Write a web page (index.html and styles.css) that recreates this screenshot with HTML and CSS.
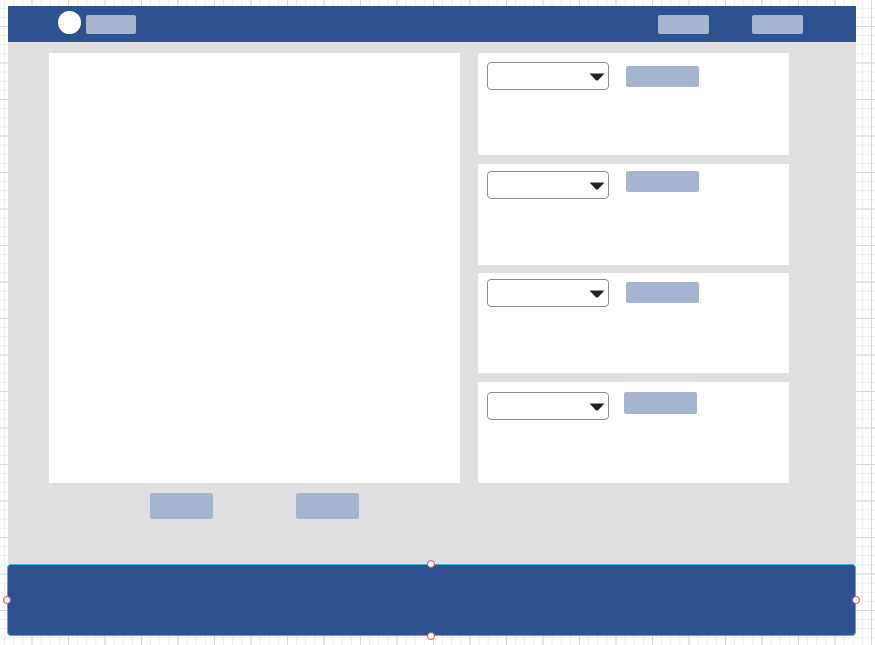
FILE: index.html
```html
<!DOCTYPE html>
<html>
<head>
<meta charset="utf-8">
<link rel="stylesheet" href="styles.css">
</head>
<body>
<div class="frame">
  <header class="topbar">
    <div class="brand">
      <span class="logo-dot"></span>
      <span class="logo-pill"></span>
    </div>
    <nav class="nav">
      <span class="nav-btn"></span>
      <span class="nav-btn"></span>
    </nav>
  </header>
  <main class="main">
    <section class="left">
      <div class="canvas-panel"></div>
      <div class="actions">
        <span class="action-btn"></span>
        <span class="action-btn"></span>
      </div>
    </section>
    <section class="cards">
      <div class="card card-1">
        <div class="select"><svg class="caret" viewBox="0 0 16 8" width="16" height="8"><path d="M0.5 0.5 H15.5 L9.3 7 Q8 8.2 6.7 7 Z" fill="#222"/></svg></div>
        <span class="card-btn card-btn-1"></span>
      </div>
      <div class="card card-2">
        <div class="select"><svg class="caret" viewBox="0 0 16 8" width="16" height="8"><path d="M0.5 0.5 H15.5 L9.3 7 Q8 8.2 6.7 7 Z" fill="#222"/></svg></div>
        <span class="card-btn"></span>
      </div>
      <div class="card card-3">
        <div class="select"><svg class="caret" viewBox="0 0 16 8" width="16" height="8"><path d="M0.5 0.5 H15.5 L9.3 7 Q8 8.2 6.7 7 Z" fill="#222"/></svg></div>
        <span class="card-btn card-btn-3"></span>
      </div>
      <div class="card card-4">
        <div class="select"><svg class="caret" viewBox="0 0 16 8" width="16" height="8"><path d="M0.5 0.5 H15.5 L9.3 7 Q8 8.2 6.7 7 Z" fill="#222"/></svg></div>
        <span class="card-btn card-btn-4"></span>
      </div>
    </section>
  </main>
  <footer class="footer">
    <span class="handle handle-top"></span>
    <span class="handle handle-left"></span>
    <span class="handle handle-right"></span>
    <span class="handle handle-bottom"></span>
  </footer>
</div>
</body>
</html>
```

FILE: styles.css
```css
html, body {
  margin: 0;
  padding: 0;
}
body {
  width: 875px;
  height: 645px;
  overflow: hidden;
  font-family: "Liberation Sans", Arial, sans-serif;
  background-color: #ffffff;
  background-image:
    linear-gradient(to right, #d6d6d6 1px, transparent 1px),
    linear-gradient(to bottom, #d6d6d6 1px, transparent 1px),
    linear-gradient(to right, #ececec 1px, transparent 1px),
    linear-gradient(to bottom, #ececec 1px, transparent 1px);
  background-size: 36.5px 36.5px, 36.5px 36.5px, 9.125px 9.125px, 9.125px 9.125px;
  background-position: 31.5px 26px, 31.5px 26px, 4.125px 7.75px, 4.125px 7.75px;
}
.frame {
  margin: 6px 0 0 8px;
  width: 848px;
  display: flex;
  flex-direction: column;
}
.topbar {
  height: 36px;
  background: #2e5190;
  display: flex;
  align-items: center;
  justify-content: space-between;
  padding: 0 53px 0 50px;
  box-sizing: border-box;
}
.brand {
  display: flex;
  align-items: center;
  gap: 5px;
}
.logo-dot {
  width: 23px;
  height: 23px;
  border-radius: 50%;
  background: #ffffff;
  margin-top: -3px;
}
.logo-pill {
  width: 50px;
  height: 19px;
  border-radius: 2px;
  background: #a5b5cf;
  margin-top: 1px;
}
.nav {
  display: flex;
  gap: 43px;
}
.nav-btn {
  width: 51px;
  height: 19px;
  border-radius: 2px;
  background: #a5b5cf;
  margin-top: 1px;
}
.main {
  height: 522px;
  background: #e0e0e0;
  box-sizing: border-box;
  padding: 11px 0 0 41px;
  display: flex;
  gap: 18px;
}
.left {
  display: flex;
  flex-direction: column;
  width: 411px;
}
.canvas-panel {
  height: 430px;
  background: #ffffff;
}
.actions {
  display: flex;
  gap: 83px;
  padding: 10px 0 0 101px;
}
.action-btn {
  width: 63px;
  height: 26px;
  border-radius: 2px;
  background: #a5b5cf;
}
.cards {
  width: 311px;
  height: 430px;
  display: grid;
  grid-template-rows: 102px 101px 100px 101px;
  row-gap: 8.67px;
}
.card {
  background: #ffffff;
  display: flex;
  align-items: flex-start;
  gap: 17px;
  padding: 9px 0 0 9px;
  box-sizing: border-box;
}
.card-2 { padding-top: 7px; }
.card-3 { padding-top: 6px; }
.card-4 { padding-top: 10px; gap: 15px; }
.select {
  width: 122px;
  height: 28px;
  box-sizing: border-box;
  border: 1px solid #8c8c8c;
  border-radius: 4px;
  background: #ffffff;
  display: flex;
  justify-content: flex-end;
  align-items: flex-start;
  padding: 10px 3px 0 0;
}
.caret {
  display: block;
}
.card-btn {
  width: 73px;
  height: 21px;
  border-radius: 2px;
  background: #a5b5cf;
}
.card-btn-1 { margin-top: 4px; }
.card-btn-3 { margin-top: 3px; }
.card-btn-4 { height: 22px; }
.footer {
  position: relative;
  margin-left: -1px;
  width: 849px;
  height: 72px;
  box-sizing: border-box;
  border: 1px solid #3cb4d4;
  border-radius: 4px;
  background: #2e5190;
}
.handle {
  position: absolute;
  width: 8px;
  height: 8px;
  box-sizing: border-box;
  border-radius: 50%;
  background: #ffffff;
  border: 1px solid #d9485a;
}
.handle-top { top: -5px; left: 419px; }
.handle-bottom { bottom: -5px; left: 419px; }
.handle-left { left: -5px; top: 31px; }
.handle-right { right: -5px; top: 31px; }
```
